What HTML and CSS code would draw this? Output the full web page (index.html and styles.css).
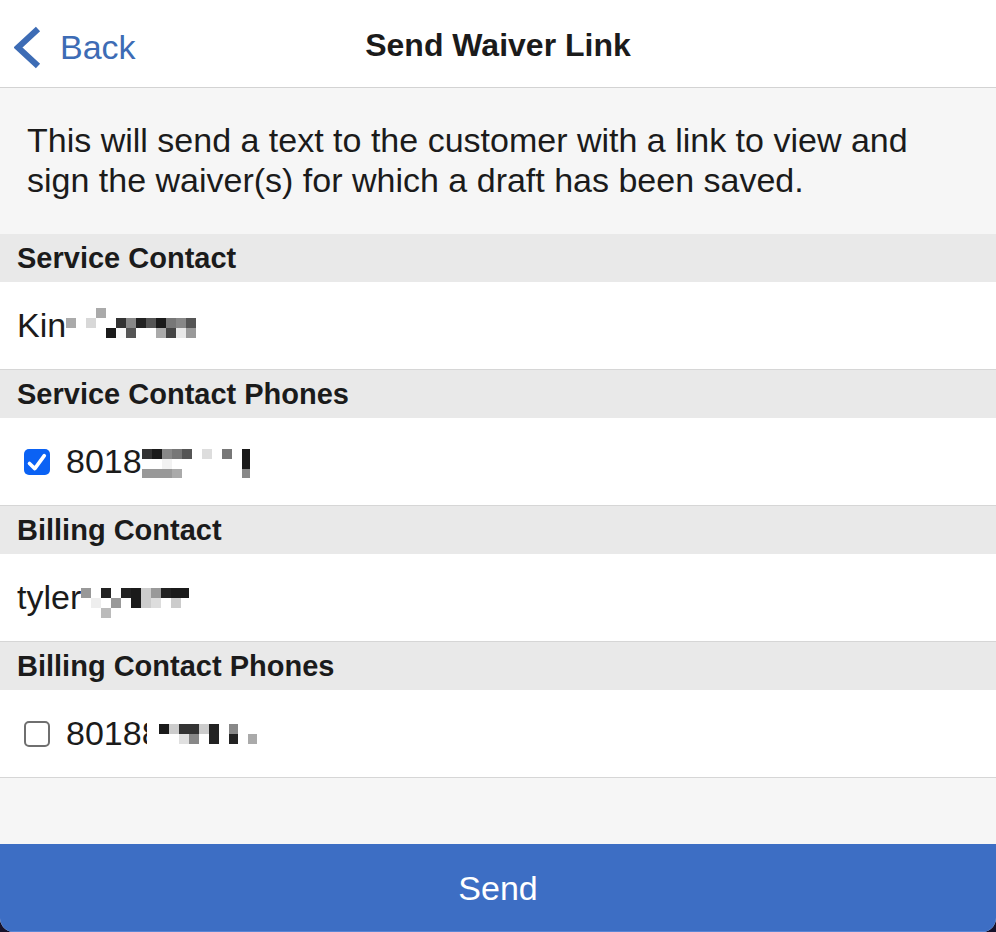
FILE: index.html
```html
<!DOCTYPE html>
<html lang="en">
<head>
<meta charset="utf-8">
<title>Send Waiver Link</title>
<link rel="stylesheet" href="styles.css">
</head>
<body>
<div class="screen">
  <header class="nav">
    <a class="back" href="#">
      <svg class="chevron" width="27" height="43" viewBox="0 0 27 43" aria-hidden="true">
        <polyline points="24,3 4,21.5 24,40" fill="none" stroke="currentColor" stroke-width="6.2" stroke-linejoin="miter"/>
      </svg>
      <span>Back</span>
    </a>
    <h1 class="title">Send Waiver Link</h1>
    <span class="nav-spacer"></span>
  </header>

  <p class="intro">This will send a text to the customer with a link to view and sign the waiver(s) for which a draft has been saved.</p>

  <section class="group">
    <h2 class="group-title">Service Contact</h2>
    <div class="row">
      <span>Kin</span>
      <svg class="redact redact-kin" width="130" height="30" viewBox="0 0 130 30" aria-hidden="true">
        <rect x="30" y="0" width="10" height="10" fill="#aaa"/>
        <rect x="0" y="10" width="10" height="10" fill="#aaa"/>
        <rect x="20" y="10" width="10" height="10" fill="#d8d8d8"/>
        <rect x="50" y="10" width="10" height="10" fill="#333"/>
        <rect x="60" y="10" width="10" height="10" fill="#888"/>
        <rect x="70" y="10" width="10" height="10" fill="#222"/>
        <rect x="80" y="10" width="10" height="10" fill="#555"/>
        <rect x="90" y="10" width="10" height="10" fill="#1a1a1a"/>
        <rect x="100" y="10" width="10" height="10" fill="#777"/>
        <rect x="110" y="10" width="10" height="10" fill="#888"/>
        <rect x="120" y="10" width="10" height="10" fill="#555"/>
        <rect x="40" y="20" width="10" height="10" fill="#1a1a1a"/>
        <rect x="50" y="20" width="10" height="10" fill="#fafafa"/>
        <rect x="60" y="20" width="10" height="10" fill="#555"/>
        <rect x="90" y="20" width="10" height="10" fill="#aaa"/>
        <rect x="100" y="20" width="10" height="10" fill="#444"/>
        <rect x="110" y="20" width="10" height="10" fill="#e8e8e8"/>
        <rect x="120" y="20" width="10" height="10" fill="#999"/>
      </svg>
    </div>
  </section>

  <section class="group">
    <h2 class="group-title">Service Contact Phones</h2>
    <label class="row check-row">
      <span class="box box-on">
        <svg width="26" height="26" viewBox="0 0 26 26" aria-hidden="true">
          <polyline points="5.5,14.5 10.8,19.6 20.3,6.6" fill="none" stroke="#fff" stroke-width="3.6" stroke-linecap="round" stroke-linejoin="round"/>
        </svg>
      </span>
      <span class="phone">8018</span>
      <svg class="redact redact-phone1" width="110" height="30" viewBox="0 0 110 30" aria-hidden="true">
        <rect x="0" y="0" width="10" height="10" fill="#333"/>
        <rect x="10" y="0" width="10" height="10" fill="#1a1a1a"/>
        <rect x="20" y="0" width="10" height="10" fill="#888"/>
        <rect x="30" y="0" width="10" height="10" fill="#777"/>
        <rect x="40" y="0" width="10" height="10" fill="#555"/>
        <rect x="60" y="0" width="10" height="10" fill="#ddd"/>
        <rect x="80" y="0" width="10" height="10" fill="#777"/>
        <rect x="100" y="0" width="8" height="20" fill="#1a1a1a"/>
        <rect x="20" y="10" width="10" height="10" fill="#f2f2f2"/>
        <rect x="0" y="20" width="30" height="9" fill="#999"/>
        <rect x="30" y="20" width="10" height="9" fill="#aaa"/>
        <rect x="100" y="20" width="8" height="9" fill="#888"/>
      </svg>
    </label>
  </section>

  <section class="group">
    <h2 class="group-title">Billing Contact</h2>
    <div class="row">
      <span>tyler</span>
      <svg class="redact redact-tyler" width="110" height="30" viewBox="0 0 110 30" aria-hidden="true">
        <rect x="0" y="0" width="10" height="10" fill="#999"/>
        <rect x="20" y="0" width="10" height="10" fill="#222"/>
        <rect x="40" y="0" width="10" height="10" fill="#222"/>
        <rect x="50" y="0" width="10" height="10" fill="#1a1a1a"/>
        <rect x="60" y="0" width="10" height="10" fill="#ccc"/>
        <rect x="70" y="0" width="10" height="10" fill="#999"/>
        <rect x="80" y="0" width="10" height="10" fill="#222"/>
        <rect x="90" y="0" width="18" height="10" fill="#1a1a1a"/>
        <rect x="10" y="10" width="10" height="10" fill="#eee"/>
        <rect x="30" y="10" width="10" height="10" fill="#999"/>
        <rect x="50" y="10" width="10" height="10" fill="#1a1a1a"/>
        <rect x="60" y="10" width="10" height="10" fill="#ccc"/>
        <rect x="70" y="10" width="10" height="10" fill="#ddd"/>
        <rect x="90" y="10" width="10" height="10" fill="#ccc"/>
        <rect x="20" y="20" width="10" height="10" fill="#bbb"/>
      </svg>
    </div>
  </section>

  <section class="group">
    <h2 class="group-title">Billing Contact Phones</h2>
    <label class="row check-row">
      <span class="box box-off"></span>
      <span class="phone">8018<span class="cut">8</span></span>
      <svg class="redact redact-phone2" width="100" height="20" viewBox="0 0 100 20" aria-hidden="true">
        <rect x="0" y="0" width="10" height="10" fill="#1a1a1a"/>
        <rect x="10" y="0" width="10" height="10" fill="#ccc"/>
        <rect x="20" y="0" width="10" height="10" fill="#333"/>
        <rect x="30" y="0" width="10" height="10" fill="#333"/>
        <rect x="40" y="0" width="10" height="10" fill="#ccc"/>
        <rect x="50" y="0" width="10" height="20" fill="#222"/>
        <rect x="70" y="0" width="9" height="10" fill="#888"/>
        <rect x="20" y="10" width="10" height="10" fill="#e0e0e0"/>
        <rect x="30" y="10" width="10" height="10" fill="#888"/>
        <rect x="70" y="10" width="9" height="10" fill="#222"/>
        <rect x="89" y="10" width="9" height="10" fill="#aaa"/>
      </svg>
    </label>
  </section>

  <div class="filler"></div>

  <button class="send" type="button">Send</button>
</div>
</body>
</html>
```

FILE: styles.css
```css
html, body {
  margin: 0;
  padding: 0;
}

body {
  background: #17122b;
  font-family: "Liberation Sans", Arial, Helvetica, sans-serif;
  color: #1b1b1b;
}

.screen {
  width: 996px;
  height: 932px;
  display: flex;
  flex-direction: column;
  background: #f6f6f6;
  border-radius: 0 0 14px 14px;
  overflow: hidden;
}

/* top navigation bar */
.nav {
  height: 87px;
  flex: none;
  background: #fff;
  border-bottom: 1px solid #d3d3d3;
  display: grid;
  grid-template-columns: 1fr auto 1fr;
  align-items: center;
}

.back {
  justify-self: start;
  display: flex;
  align-items: center;
  gap: 19px;
  padding-left: 14px;
  margin-top: 8px;
  color: #3d6cb5;
  font-size: 34px;
  text-decoration: none;
}

.chevron {
  display: block;
  flex: none;
}

.title {
  margin: 4px 0 0;
  font-size: 32px;
  font-weight: 700;
  color: #1b1b1b;
}

/* explanation text */
.intro {
  margin: 0;
  flex: none;
  padding: 32px 27px 34px;
  font-size: 34px;
  line-height: 40px;
  background: #f6f6f6;
}

/* grouped list */
.group-title {
  margin: 0;
  height: 48px;
  display: flex;
  align-items: center;
  padding-left: 17px;
  background: #e9e9e9;
  font-size: 29px;
  font-weight: 700;
  color: #1b1b1b;
}

.row {
  height: 87px;
  box-sizing: content-box;
  display: flex;
  align-items: center;
  padding-left: 17px;
  background: #fff;
  border-bottom: 1px solid #d6d6d6;
  font-size: 34px;
}

.check-row {
  padding-left: 24px;
}

.box {
  width: 26px;
  height: 26px;
  box-sizing: border-box;
  border-radius: 5px;
  margin-right: 16px;
  flex: none;
}

.box svg {
  display: block;
}

.box-on {
  background: #0b62f4;
}

.box-off {
  background: #fff;
  border: 2px solid #6f6f6f;
}

.phone {
  white-space: nowrap;
}

.cut {
  display: inline-block;
  width: 5px;
  overflow: hidden;
  vertical-align: bottom;
}

/* pixelated redaction blocks */
.redact {
  display: block;
  flex: none;
  shape-rendering: crispEdges;
}

.redact-kin {
  margin-bottom: 5px;
}

.redact-phone1 {
  margin-top: 4px;
}

.redact-tyler {
  margin-top: 10px;
}

.redact-phone2 {
  margin-left: 12px;
}

.filler {
  flex: 1;
  background: #f6f6f6;
}

/* primary action */
.send {
  flex: none;
  height: 88px;
  border: 0;
  margin: 0;
  padding: 0;
  background: #3d6ec4;
  box-shadow: inset 0 -1px 0 #5a86d6;
  color: #fff;
  font-family: "Liberation Sans", Arial, Helvetica, sans-serif;
  font-size: 34px;
  cursor: pointer;
}
```
